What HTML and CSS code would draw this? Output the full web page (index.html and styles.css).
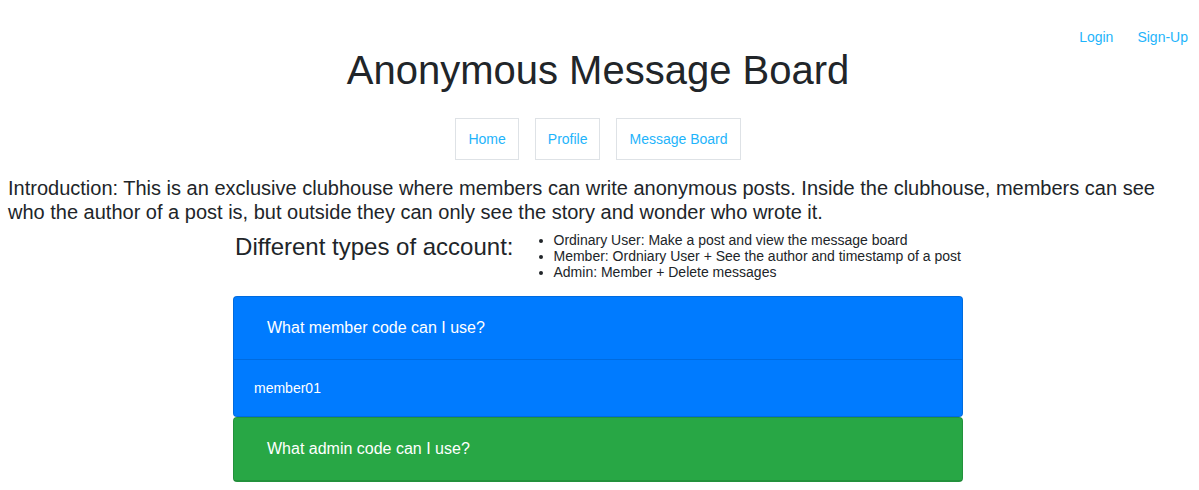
FILE: index.html
```html
<!DOCTYPE html>
<html lang="en">
<head>
<meta charset="utf-8">
<title>Anonymous Message Board</title>
<link rel="stylesheet" href="styles.css">
</head>
<body>
<header class="topbar">
  <a class="toplink" href="#">Login</a>
  <a class="toplink" href="#">Sign-Up</a>
</header>
<main class="content">
  <h1 class="title">Anonymous Message Board</h1>
  <nav class="mainnav">
    <a class="navbtn" href="#">Home</a>
    <a class="navbtn" href="#">Profile</a>
    <a class="navbtn" href="#">Message Board</a>
  </nav>
  <p class="intro">Introduction: This is an exclusive clubhouse where members can write anonymous posts. Inside the clubhouse, members can see who the author of a post is, but outside they can only see the story and wonder who wrote it.</p>
  <section class="types">
    <h2 class="types-title">Different types of account:</h2>
    <ul class="types-list">
      <li>Ordinary User: Make a post and view the message board</li>
      <li>Member: Ordniary User + See the author and timestamp of a post</li>
      <li>Admin: Member + Delete messages</li>
    </ul>
  </section>
  <div class="accordion">
    <div class="card card-blue">
      <div class="card-header"><button class="card-btn">What member code can I use?</button></div>
      <div class="card-body">member01</div>
    </div>
    <div class="card card-green">
      <div class="card-header"><button class="card-btn">What admin code can I use?</button></div>
    </div>
  </div>
</main>
</body>
</html>
```

FILE: styles.css
```css
* { box-sizing: border-box; }
body {
  margin: 0;
  font-family: "Liberation Sans", Arial, sans-serif;
  color: #212529;
  background: #fff;
}
a { text-decoration: none; }
.topbar {
  display: flex;
  justify-content: flex-end;
  padding-top: 28px;
  height: 46px;
  margin-right: -1px;
}
.toplink {
  color: #1eb4fb;
  font-size: 14px;
  line-height: 18px;
  padding: 0 12px;
}
.content {
  padding-right: 3px;
}
.title {
  margin: 0;
  font-size: 40px;
  font-weight: 400;
  line-height: 48px;
  text-align: center;
}
.mainnav {
  display: flex;
  justify-content: center;
  gap: 16px;
  margin-top: 24px;
}
.navbtn {
  display: block;
  border: 1px solid #dee2e6;
  padding: 10px 12px;
  font-size: 14px;
  line-height: 20px;
  color: #1eb4fb;
}
.intro {
  margin: 16px 0 0;
  padding: 0 0 0 8px;
  font-size: 20px;
  line-height: 24px;
}
.types {
  display: flex;
  justify-content: center;
  align-items: flex-start;
  margin-top: 8px;
}
.types-title {
  margin: 0;
  font-size: 24px;
  font-weight: 400;
  line-height: 29px;
}
.types-list {
  margin: 0;
  padding-left: 40px;
  font-size: 14px;
  line-height: 16px;
}
.accordion {
  width: 730px;
  margin: 16px auto 0;
}
.card {
  border: 1px solid rgba(0, 0, 0, 0.125);
  border-radius: 4px;
  color: #fff;
}
.card-blue { background: #007bff; }
.card-green { background: #28a745; }
.card-header {
  padding: 12px 20px;
  border-bottom: 1px solid rgba(0, 0, 0, 0.125);
}
.card-btn {
  display: block;
  background: transparent;
  border: 1px solid transparent;
  color: #fff;
  font-family: inherit;
  font-size: 16px;
  line-height: 24px;
  padding: 6px 12px;
  cursor: pointer;
}
.card-body {
  padding: 20px 20px;
  font-size: 14px;
  line-height: 16px;
}
```
